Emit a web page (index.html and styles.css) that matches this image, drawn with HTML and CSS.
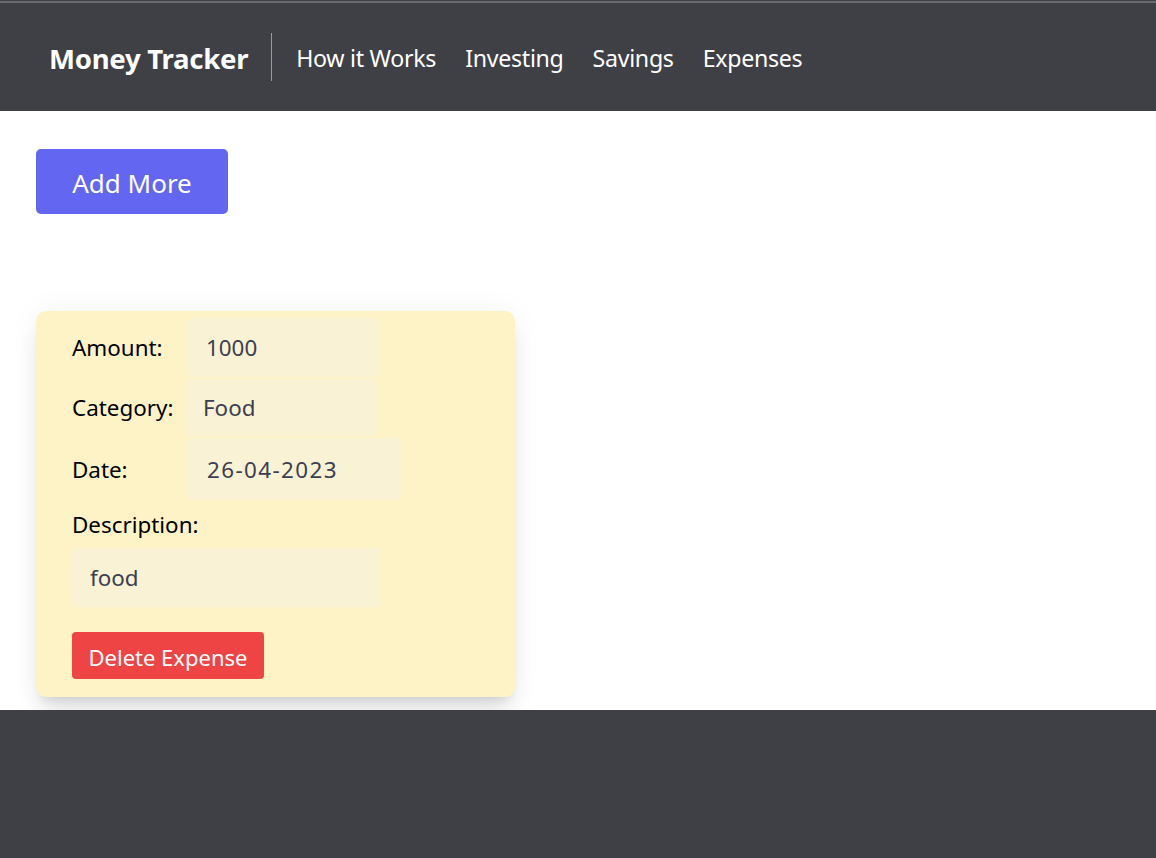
FILE: index.html
```html
<!DOCTYPE html>
<html>
<head>
<meta charset="utf-8">
<link rel="stylesheet" href="styles.css">
</head>
<body>
<div class="page">
  <header class="topbar">
    <div class="brand">Money Tracker</div>
    <div class="divider"></div>
    <nav class="nav">
      <a class="nav-link">How it Works</a>
      <a class="nav-link">Investing</a>
      <a class="nav-link">Savings</a>
      <a class="nav-link">Expenses</a>
    </nav>
  </header>
  <main class="main">
    <button class="add-btn">Add More</button>
    <section class="card">
      <div class="row row-amount">
        <span class="label">Amount:</span>
        <div class="field f-amount">1000</div>
      </div>
      <div class="row row-category">
        <span class="label">Category:</span>
        <div class="field f-category">Food</div>
      </div>
      <div class="row row-date">
        <span class="label">Date:</span>
        <div class="field f-date">26-04-2023</div>
      </div>
      <div class="desc-label">Description:</div>
      <div class="field f-desc">food</div>
      <button class="del-btn">Delete Expense</button>
    </section>
  </main>
  <footer class="footer"></footer>
</div>
</body>
</html>
```

FILE: styles.css
```css
* { box-sizing: border-box; }
html, body { margin: 0; padding: 0; }
body {
  font-family: "Noto Sans", "Open Sans", sans-serif;
  background: #ffffff;
  color: #000;
}
.page {
  display: flex;
  flex-direction: column;
  min-height: 858px;
}
.topbar {
  height: 111px;
  background: #3f3f46;
  box-shadow: inset 0 1px #3f3f46, inset 0 3px #6b6b6e;
  display: flex;
  align-items: center;
  padding-left: 49px;
  padding-top: 5px;
}
.brand {
  color: #fff;
  font-weight: 700;
  font-size: 27.6px;
  letter-spacing: -0.3px;
}
.divider {
  width: 1px;
  height: 48px;
  background: #9a9aa0;
  margin-left: 23px;
  margin-right: 24px;
  margin-top: -3px;
}
.nav {
  display: flex;
  gap: 29px;
}
.nav-link {
  color: #fff;
  font-size: 23.2px;
  letter-spacing: -0.3px;
}
.main {
  padding: 38px 36px 13px 36px;
  display: flex;
  flex-direction: column;
  align-items: flex-start;
}
.add-btn {
  width: 192px;
  height: 65px;
  border: none;
  border-radius: 5px;
  background: #6366f1;
  color: #fff;
  font-family: inherit;
  font-size: 26px;
  padding: 3px 0 0 0;
}
.card {
  margin-top: 97px;
  width: 479px;
  background: #fef3c7;
  border-radius: 10px;
  padding: 7px 36px 18px 36px;
  box-shadow: 0 20px 25px -5px rgba(0,0,0,0.1), 0 8px 10px -6px rgba(0,0,0,0.1), 0 0 30px rgba(0,0,0,0.05);
  display: flex;
  flex-direction: column;
  align-items: flex-start;
}
.row {
  display: flex;
  align-items: center;
}
.row-category, .row-date { margin-top: 2px; }
.label {
  width: 115px;
  font-size: 22.4px;
}
.field {
  background: #faf2d4;
  border-radius: 5px;
  color: #3b3f52;
  font-size: 22.4px;
  display: flex;
  align-items: center;
}
.f-amount { width: 192px; height: 59px; padding-left: 19px; }
.f-category { width: 191px; height: 57px; padding-left: 17px; margin-left: -1px; }
.f-date { width: 215px; height: 62px; padding-left: 20px; letter-spacing: 1.4px; }
.desc-label {
  font-size: 22.4px;
  margin-top: 10px;
  height: 30px;
  line-height: 30px;
}
.f-desc {
  margin-top: 8px;
  width: 308px;
  height: 59px;
  padding-left: 18px;
}
.del-btn {
  margin-top: 25px;
  width: 192px;
  height: 47px;
  border: none;
  border-radius: 4px;
  background: #ef4444;
  color: #fff;
  font-family: inherit;
  font-size: 22px;
  padding: 2px 0 0 0;
}
.footer {
  flex: 1;
  background: #3f3f46;
}
```
